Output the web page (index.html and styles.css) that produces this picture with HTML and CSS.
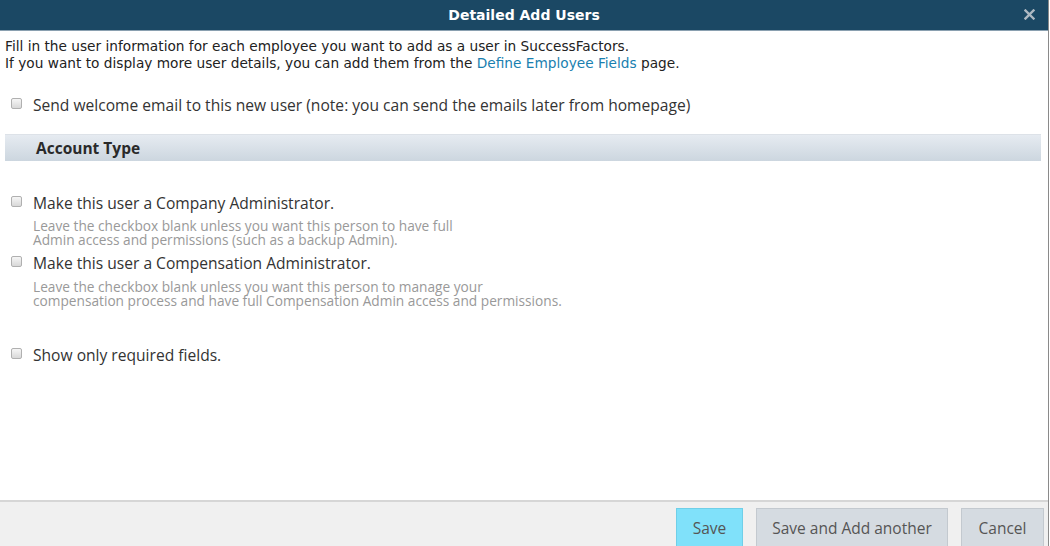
FILE: index.html
```html
<!DOCTYPE html>
<html lang="en">
<head>
<meta charset="utf-8">
<title>Detailed Add Users</title>
<link rel="stylesheet" href="styles.css">
</head>
<body>
<div class="dialog">
  <header class="titlebar">
    <h1 class="title">Detailed Add Users</h1>
    <span class="close" aria-label="Close">
      <svg width="11" height="11" viewBox="0 0 11 11"><path d="M1.5 1.5 L9.5 9.5 M9.5 1.5 L1.5 9.5" stroke="#aeb9c2" stroke-width="2.4" stroke-linecap="square"/></svg>
    </span>
  </header>
  <main class="body">
    <div class="intro">
      <p>Fill in the user information for each employee you want to add as a user in SuccessFactors.</p>
      <p>If you want to display more user details, you can add them from the <a href="#" class="link">Define Employee Fields</a> page.</p>
    </div>
    <label class="check welcome"><span class="box"></span><span>Send welcome email to this new user (note: you can send the emails later from homepage)</span></label>
    <div class="section">Account Type</div>
    <div class="option first">
      <label class="check"><span class="box"></span><span>Make this user a Company Administrator.</span></label>
      <p class="desc">Leave the checkbox blank unless you want this person to have full<br>Admin access and permissions (such as a backup Admin).</p>
    </div>
    <div class="option second">
      <label class="check"><span class="box"></span><span>Make this user a Compensation Administrator.</span></label>
      <p class="desc">Leave the checkbox blank unless you want this person to manage your<br>compensation process and have full Compensation Admin access and permissions.</p>
    </div>
    <label class="check required"><span class="box"></span><span>Show only required fields.</span></label>
  </main>
  <footer class="footer">
    <button class="btn primary">Save</button>
    <button class="btn add">Save and Add another</button>
    <button class="btn cancel">Cancel</button>
  </footer>
</div>
</body>
</html>
```
FILE: styles.css
```css
* { box-sizing: border-box; }
html, body { margin: 0; padding: 0; }
body {
  width: 1050px;
  height: 546px;
  overflow: hidden;
  background: #fff;
  font-family: "Open Sans", "Liberation Sans", Arial, sans-serif;
  color: #333;
}
.dialog {
  width: 1049px;
  height: 546px;
  display: flex;
  flex-direction: column;
  border-right: 1px solid #8a8a8a;
}
.titlebar {
  height: 31px;
  flex: none;
  background: #1b4864;
  border-bottom: 1px solid #8aa0b0;
  display: flex;
  align-items: center;
  justify-content: center;
  position: relative;
}
.title {
  margin: 0;
  font-family: "DejaVu Sans", Tahoma, sans-serif;
  font-size: 14px;
  font-weight: 700;
  color: #fff;
}
.close {
  position: absolute;
  right: 13px;
  top: 9px;
  width: 11px;
  height: 11px;
  display: flex;
}
.body {
  flex: 1;
  padding: 7px 7px 0 5px;
}
.intro {
  font-family: "DejaVu Sans", Tahoma, sans-serif;
  font-size: 13.7px;
  line-height: 17px;
  color: #222;
}
.intro p { margin: 0; white-space: nowrap; }
.link { color: #1a7fb0; text-decoration: none; }
.check {
  display: flex;
  align-items: center;
  gap: 11px;
  height: 22px;
  font-size: 15.6px;
  color: #333;
  padding-left: 6px;
  white-space: nowrap;
}
.box {
  width: 11px;
  height: 11px;
  margin-bottom: 4px;
  border: 1px solid #b0b0b0;
  border-radius: 2px;
  background: linear-gradient(#f6f6f6, #d8d8d8);
  flex: none;
}
.welcome { margin-top: 22px; }
.section {
  margin-top: 18px;
  height: 27px;
  background: linear-gradient(#e6ebf1, #ccd6df);
  border-top: 1px solid #dde2e8;
  font-weight: 700;
  font-size: 15.5px;
  color: #2a2a2a;
  display: flex;
  align-items: center;
  padding-left: 31px;
}
.option.first { margin-top: 31px; }
.option.second { margin-top: 5px; }
.desc {
  margin: 5px 0 0 28px;
  font-size: 13.7px;
  line-height: 14px;
  color: #999;
  white-space: nowrap;
}
.option.second .desc { margin-top: 6px; }
.required { margin-top: 36px; }
.footer {
  height: 46px;
  flex: none;
  background: #f0f0f0;
  border-top: 2px solid #d6d6d6;
  display: flex;
  justify-content: flex-end;
  align-items: flex-end;
  gap: 13px;
  padding-right: 4px;
}
.btn {
  height: 38px;
  padding: 0;
  font-family: "Open Sans", "Liberation Sans", Arial, sans-serif;
  font-size: 15.5px;
  color: #555;
  background: #d5dbe1;
  border: 1px solid #c3c9cf;
  border-bottom: none;
}
.btn.primary {
  background: #80e1fa;
  border-color: #6fcfe8;
  width: 67px;
}
.btn.add { width: 192px; }
.btn.cancel { width: 83px; }
```
